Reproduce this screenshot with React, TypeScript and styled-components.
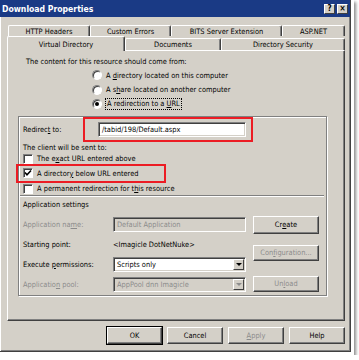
import React from "react";
import styled, { createGlobalStyle, css } from "styled-components";

const face = "#d4d0c8";
const shade = "#808080";
const dark = "#404040";
const grayText = "#8c8c8c";

const GlobalStyle = createGlobalStyle`
  html, body {
    margin: 0;
    padding: 0;
    background: #ffffff;
  }
  body {
    font-family: "DejaVu Sans Condensed", "DejaVu Sans", sans-serif;
    font-stretch: condensed;
    font-size: 7.4px;
    color: #000;
  }
`;

const Frame = styled.div`
  width: 354px;
  height: 355px;
  box-sizing: border-box;
  padding: 0 3px 3px 0;
  background: #fff;
  box-shadow: 2px 2px 3px rgba(0, 0, 0, 0.45);
`;

const Window = styled.div`
  width: 351px;
  height: 352px;
  box-sizing: border-box;
  background: ${face};
  border-right: 1px solid ${dark};
  border-bottom: 1px solid ${dark};
  box-shadow: inset 1px 1px #fff, inset -1px -1px ${shade};
  display: flex;
  flex-direction: column;
`;

const TitleBar = styled.div`
  height: 17px;
  background: #1a3a85;
  display: flex;
  align-items: center;
  justify-content: space-between;
  padding: 0 2px 0 2px;
`;

const Title = styled.span`
  color: #fff;
  font-weight: bold;
  font-size: 8.6px;
`;

const CaptionButtons = styled.div`
  display: flex;
  gap: 2px;
`;

const CaptionButton = styled.div`
  width: 11px;
  height: 10px;
  box-sizing: border-box;
  background: ${face};
  border: 1px solid;
  border-color: #fff ${dark} ${dark} #fff;
  display: flex;
  align-items: center;
  justify-content: center;
  font-weight: bold;
  font-size: 8px;
  line-height: 1;
`;

const TabArea = styled.div`
  margin-top: 8px;
  display: flex;
  flex-direction: column;
`;

const TabRow = styled.div<{ $indent: number; $h: number }>`
  display: flex;
  align-items: flex-end;
  margin-left: ${(p) => p.$indent}px;
  height: ${(p) => p.$h}px;
`;

const Tab = styled.div<{ $w: number; $selected?: boolean; $h: number }>`
  width: ${(p) => p.$w}px;
  height: ${(p) => p.$h}px;
  box-sizing: border-box;
  background: ${face};
  border-top: 1px solid #fff;
  border-left: 1px solid #fff;
  border-right: 1px solid ${dark};
  box-shadow: inset -1px 0 ${shade};
  border-radius: 2px 2px 0 0;
  display: flex;
  align-items: center;
  justify-content: center;
  white-space: nowrap;
  ${(p) =>
    p.$selected &&
    css`
      position: relative;
      z-index: 1;
      margin-bottom: -1px;
    `}
`;

const Panel = styled.div`
  margin-left: 7px;
  width: 338px;
  height: 271px;
  box-sizing: border-box;
  border: 1px solid;
  border-color: #fff ${dark} ${dark} #fff;
  box-shadow: inset -1px -1px ${shade};
  display: flex;
  flex-direction: column;
`;

const Line = styled.div<{ $indent?: number; $disabled?: boolean; $top?: number }>`
  height: 11px;
  line-height: 11px;
  margin-left: ${(p) => p.$indent ?? 0}px;
  margin-top: ${(p) => p.$top ?? 0}px;
  white-space: nowrap;
  color: ${(p) => (p.$disabled ? grayText : "#000")};
`;

const RadioList = styled.div`
  margin-left: 84px;
  margin-top: 1px;
  display: flex;
  flex-direction: column;
`;

const OptionRow = styled.div<{ $h?: number }>`
  height: ${(p) => p.$h ?? 14.5}px;
  display: flex;
  align-items: center;
  gap: 4px;
  white-space: nowrap;
`;

const RadioCircle = styled.span<{ $on?: boolean }>`
  width: 10px;
  height: 10px;
  box-sizing: border-box;
  border-radius: 50%;
  background: #fff;
  border: 1px solid;
  border-color: ${shade} #fff #fff ${shade};
  box-shadow: inset 1px 1px ${dark};
  display: flex;
  align-items: center;
  justify-content: center;
  flex-shrink: 0;
  &::after {
    content: "";
    width: 4px;
    height: 4px;
    border-radius: 50%;
    background: ${(p) => (p.$on ? "#000" : "transparent")};
  }
`;

const Focused = styled.span`
  outline: 1px dotted #000;
  padding: 0 1px;
  line-height: 10px;
`;

const U = styled.span`
  text-decoration: underline;
`;

const GroupBox = styled.div`
  margin: 4px 0 0 10px;
  width: 309px;
  height: 180px;
  box-sizing: border-box;
  border: 1px solid ${shade};
  box-shadow: inset 1px 1px #fff, 1px 1px #fff;
  padding: 0 0 0 4px;
  display: flex;
  flex-direction: column;
`;

const RedirectRow = styled.div`
  display: flex;
  align-items: center;
  height: 25px;
`;

const RedirectLabel = styled.span`
  width: 60px;
`;

const InputMark = styled.div`
  width: 170px;
  height: 25px;
  box-sizing: border-box;
  border: 2px solid #ec1c24;
  padding: 3px 5px 2px 13px;
  display: flex;
`;

const Field = styled.div<{ $disabled?: boolean }>`
  width: 100%;
  height: 15px;
  box-sizing: border-box;
  background: ${(p) => (p.$disabled ? face : "#fff")};
  color: ${(p) => (p.$disabled ? grayText : "#000")};
  border: 1px solid;
  border-color: ${shade} #fff #fff ${shade};
  box-shadow: inset 1px 1px ${dark}, inset -1px -1px ${face};
  display: flex;
  align-items: center;
  justify-content: space-between;
  padding: 0 1px 0 3px;
  white-space: nowrap;
  overflow: hidden;
`;

const CheckBox = styled.span`
  width: 10px;
  height: 10px;
  box-sizing: border-box;
  background: #fff;
  border: 1px solid;
  border-color: ${shade} #fff #fff ${shade};
  box-shadow: inset 1px 1px ${dark};
  display: flex;
  align-items: center;
  justify-content: center;
  flex-shrink: 0;
`;

const CheckMark = styled.div`
  margin: -1px 0 0 -7px;
  width: 150px;
  height: 19px;
  box-sizing: border-box;
  border: 2px solid #ec1c24;
  padding-left: 5px;
  display: flex;
  align-items: center;
  gap: 4px;
  white-space: nowrap;
`;

const Separator = styled.div`
  margin: 0 0 0 -3px;
  width: 304px;
  border-top: 1px solid ${shade};
  border-bottom: 1px solid #fff;
`;

const SettingsGrid = styled.div`
  margin-top: 5px;
  display: grid;
  grid-template-columns: 223px 66px;
  column-gap: 7px;
`;

const FieldColumn = styled.div`
  display: grid;
  grid-template-columns: 90px 133px;
  grid-auto-rows: 20px;
  align-items: center;
`;

const ButtonColumn = styled.div`
  display: flex;
  flex-direction: column;
`;

const Button = styled.div<{
  $w?: number;
  $h?: number;
  $top?: number;
  $disabled?: boolean;
  $default?: boolean;
}>`
  width: ${(p) => p.$w ?? 66}px;
  height: ${(p) => p.$h ?? 17}px;
  margin-top: ${(p) => p.$top ?? 0}px;
  box-sizing: border-box;
  background: ${face};
  border: 1px solid;
  border-color: #fff ${dark} ${dark} #fff;
  box-shadow: inset -1px -1px ${shade};
  color: ${(p) => (p.$disabled ? grayText : "#000")};
  display: flex;
  align-items: center;
  justify-content: center;
  white-space: nowrap;
  ${(p) =>
    p.$default &&
    css`
      outline: 1px solid #000;
    `}
`;

const ArrowButton = styled.span<{ $disabled?: boolean }>`
  width: 11px;
  height: 11px;
  box-sizing: border-box;
  background: ${face};
  border: 1px solid;
  border-color: #fff ${dark} ${dark} #fff;
  display: flex;
  align-items: center;
  justify-content: center;
  &::after {
    content: "";
    border-left: 3px solid transparent;
    border-right: 3px solid transparent;
    border-top: 3px solid ${(p) => (p.$disabled ? grayText : "#000")};
  }
`;

const Footer = styled.div`
  margin-top: 6px;
  display: flex;
  justify-content: flex-end;
  gap: 5px;
  padding-right: 5px;
`;

const Check = () => (
  <svg width="8" height="8" viewBox="0 0 8 8">
    <path d="M1 3.5 L3 5.8 L7 1.5" fill="none" stroke="#000" strokeWidth="1.6" />
  </svg>
);

export default function App() {
  return (
    <>
      <GlobalStyle />
      <Frame>
        <Window>
          <TitleBar>
            <Title>Download Properties</Title>
            <CaptionButtons>
              <CaptionButton>?</CaptionButton>
              <CaptionButton>×</CaptionButton>
            </CaptionButtons>
          </TitleBar>

          <TabArea>
            <TabRow $indent={8} $h={11}>
              <Tab $w={82} $h={11}>HTTP Headers</Tab>
              <Tab $w={81} $h={11}>Custom Errors</Tab>
              <Tab $w={111} $h={11}>BITS Server Extension</Tab>
              <Tab $w={63} $h={11}>ASP.NET</Tab>
            </TabRow>
            <TabRow $indent={7} $h={14}>
              <Tab $w={118} $h={15} $selected>
                Virtual Directory
              </Tab>
              <Tab $w={96} $h={12}>Documents</Tab>
              <Tab $w={124} $h={12}>Directory Security</Tab>
            </TabRow>
          </TabArea>

          <Panel>
            <Line $indent={18} $top={5}>
              The content for this resource should come from:
            </Line>
            <RadioList>
              <OptionRow>
                <RadioCircle />
                <span>
                  A <U>d</U>irectory located on this computer
                </span>
              </OptionRow>
              <OptionRow>
                <RadioCircle />
                <span>
                  A s<U>h</U>are located on another computer
                </span>
              </OptionRow>
              <OptionRow>
                <RadioCircle $on />
                <Focused>
                  A redirection to a <U>U</U>RL
                </Focused>
              </OptionRow>
            </RadioList>

            <GroupBox>
              <RedirectRow>
                <RedirectLabel>
                  Redirec<U>t</U> to:
                </RedirectLabel>
                <InputMark>
                  <Field>/tabid/198/Default.aspx</Field>
                </InputMark>
              </RedirectRow>
              <Line>The client will be sent to:</Line>
              <OptionRow $h={13}>
                <CheckBox />
                <span>
                  The e<U>x</U>act URL entered above
                </span>
              </OptionRow>
              <CheckMark>
                <CheckBox>
                  <Check />
                </CheckBox>
                <span>
                  A director<U>y</U> below URL entered
                </span>
              </CheckMark>
              <OptionRow $h={12}>
                <CheckBox />
                <span>
                  A permanent redirection for t<U>h</U>is resource
                </span>
              </OptionRow>
              <Separator />
              <Line $top={2}>Application settings</Line>

              <SettingsGrid>
                <FieldColumn>
                  <Line $disabled>
                    Application na<U>m</U>e:
                  </Line>
                  <Field $disabled>Default Application</Field>
                  <Line>Starting point:</Line>
                  <Line>&lt;Imagicle DotNetNuke&gt;</Line>
                  <Line>
                    Execute <U>p</U>ermissions:
                  </Line>
                  <Field>
                    <span>Scripts only</span>
                    <ArrowButton />
                  </Field>
                  <Line $disabled>
                    Applicatio<U>n</U> pool:
                  </Line>
                  <Field $disabled>
                    <span>AppPool dnn Imagicle</span>
                    <ArrowButton $disabled />
                  </Field>
                </FieldColumn>
                <ButtonColumn>
                  <Button $top={1} $h={18}>
                    Cr<U>e</U>ate
                  </Button>
                  <Button $top={11} $h={16} $disabled>
                    Con<U>f</U>iguration...
                  </Button>
                  <Button $top={15} $h={16} $disabled>
                    Un<U>l</U>oad
                  </Button>
                </ButtonColumn>
              </SettingsGrid>
            </GroupBox>
          </Panel>

          <Footer>
            <Button $w={55} $default>
              OK
            </Button>
            <Button $w={56}>Cancel</Button>
            <Button $w={56} $disabled>
              <U>A</U>pply
            </Button>
            <Button $w={56}>Help</Button>
          </Footer>
        </Window>
      </Frame>
    </>
  );
}
